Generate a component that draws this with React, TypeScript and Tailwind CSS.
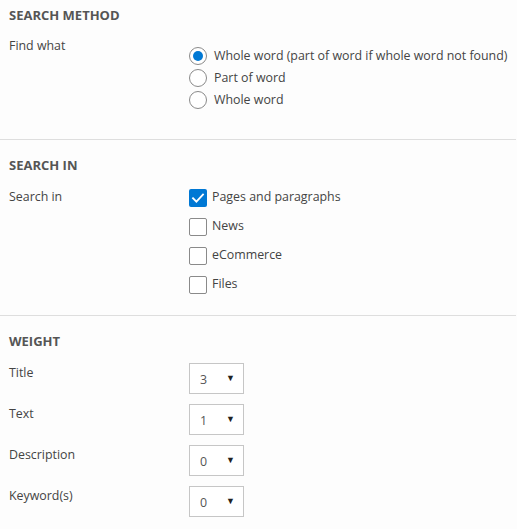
const font = { fontFamily: '"Open Sans", "Noto Sans", sans-serif' }

function Heading({ children }: { children: string }) {
  return <h2 className="text-[13px] font-bold leading-[18px] text-[#555]">{children}</h2>
}

function Radio({ label, checked = false }: { label: string; checked?: boolean }) {
  return (
    <label className="flex h-[22px] items-center gap-[7px]">
      <span className="flex h-[18px] w-[18px] items-center justify-center rounded-full border border-[#8a8a8a] bg-white">
        {checked && <span className="h-[10px] w-[10px] rounded-full bg-[#0078d4]" />}
      </span>
      <span>{label}</span>
    </label>
  )
}

function Check({ label, checked = false }: { label: string; checked?: boolean }) {
  return (
    <label className="flex h-[29px] items-center gap-[5px]">
      {checked ? (
        <span className="flex h-[18px] w-[18px] items-center justify-center rounded-[2px] bg-[#0078d4]">
          <svg width="14" height="14" viewBox="0 0 14 14" fill="none">
            <path d="M2 7.2 5.4 10.6 12 3.6" stroke="white" strokeWidth="1.8" strokeLinecap="square" />
          </svg>
        </span>
      ) : (
        <span className="h-[18px] w-[18px] rounded-[2px] border border-[#8a8a8a] bg-white" />
      )}
      <span>{label}</span>
    </label>
  )
}

function Select({ value }: { value: string }) {
  return (
    <div className="flex h-[31px] w-[55px] items-center justify-between border border-[#c6c6c6] bg-white pl-[10px] pr-[8px] pt-[4px]">
      <span className="text-[#555]">{value}</span>
      <span className="-mt-[6px] text-[9px] text-[#222]">▼</span>
    </div>
  )
}

export default function App() {
  return (
    <div style={font} className="min-h-[529px] w-[517px] bg-[#fdfdfd] text-[12.4px] text-[#444]">
      <section className="px-[9px] pt-[6px] pb-[28px]">
        <Heading>SEARCH METHOD</Heading>
        <div className="mt-[13px] grid grid-cols-[180px_1fr]">
          <span className="leading-[18px]">Find what</span>
          <div className="mt-[8px] flex flex-col">
            <Radio label="Whole word (part of word if whole word not found)" checked />
            <Radio label="Part of word" />
            <Radio label="Whole word" />
          </div>
        </div>
      </section>
      <div className="mr-px h-px bg-[#dedede]" />
      <section className="px-[9px] pt-[16px] pb-[16px]">
        <Heading>SEARCH IN</Heading>
        <div className="mt-[9px] grid grid-cols-[180px_1fr]">
          <span className="mt-[5px] leading-[18px]">Search in</span>
          <div className="flex flex-col">
            <Check label="Pages and paragraphs" checked />
            <Check label="News" />
            <Check label="eCommerce" />
            <Check label="Files" />
          </div>
        </div>
      </section>
      <div className="mr-px h-px bg-[#dedede]" />
      <section className="px-[9px] pt-[16px] pb-[11px]">
        <Heading>WEIGHT</Heading>
        <div className="mt-[13px] flex flex-col gap-[10px]">
          {[
            ['Title', '3'],
            ['Text', '1'],
            ['Description', '0'],
            ['Keyword(s)', '0'],
          ].map(([label, value]) => (
            <div key={label} className="grid grid-cols-[180px_1fr]">
              <span className="pt-px leading-[18px]">{label}</span>
              <Select value={value} />
            </div>
          ))}
        </div>
      </section>
    </div>
  )
}
